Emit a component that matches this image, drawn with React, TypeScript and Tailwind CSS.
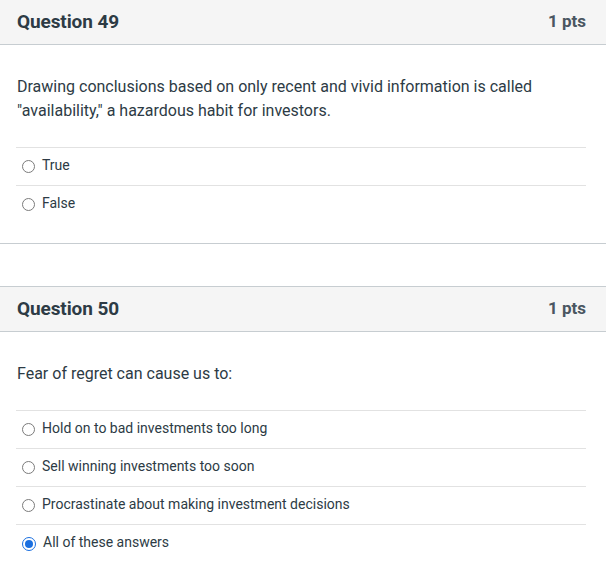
import React from 'react';

type Question = {
  title: string;
  text: React.ReactNode;
  answers: string[];
  selected?: number;
};

const questions: Question[] = [
  {
    title: 'Question 49',
    text: (
      <>
        Drawing conclusions based on only recent and vivid information is called
        <br />
        "availability," a hazardous habit for investors.
      </>
    ),
    answers: ['True', 'False'],
  },
  {
    title: 'Question 50',
    text: 'Fear of regret can cause us to:',
    answers: [
      'Hold on to bad investments too long',
      'Sell winning investments too soon',
      'Procrastinate about making investment decisions',
      'All of these answers',
    ],
    selected: 3,
  },
];

const Radio = ({ checked }: { checked: boolean }) =>
  checked ? (
    <span className="w-[14px] h-[14px] rounded-full border-[1.5px] border-[#1a6fe0] flex items-center justify-center shrink-0">
      <span className="w-[8px] h-[8px] rounded-full bg-[#1a6fe0]" />
    </span>
  ) : (
    <span className="w-[13px] h-[13px] rounded-full border border-[#7b7b7b] bg-white shrink-0" />
  );

const QuestionBlock = ({ q, first }: { q: Question; first: boolean }) => (
  <section className={`border-b border-[#c7cdd1] ${first ? '' : 'mt-[42px] border-t'}`}>
    <div className="h-[45px] bg-[#f5f5f5] border-b border-[#c7cdd1] pl-[17px] pr-[20px] flex items-center justify-between">
      <h2 className="text-[19px] font-bold text-[#2d3b45] tracking-[-0.1px]">{q.title}</h2>
      <span className="text-[17px] font-bold text-[#4a5661]">1 pts</span>
    </div>
    <div className="pl-[16px] pr-[20px] pt-[30px] pb-5">
      <p className="text-[16px] leading-6 text-[#2d3b45] pl-[1px]">{q.text}</p>
      <div className="mt-[24px]">
        {q.answers.map((a, i) => (
          <div key={a} className="h-[38px] border-t border-[#e2e2e2] flex items-center gap-[7px] pl-[6px]">
            <Radio checked={q.selected === i} />
            <span className="text-[14px] text-[#2d3b45] -translate-y-px">{a}</span>
          </div>
        ))}
      </div>
    </div>
  </section>
);

export default function App() {
  return (
    <div className="w-[606px] h-[562px] overflow-hidden bg-white font-['Roboto',sans-serif]">
      {questions.map((q, i) => (
        <QuestionBlock key={q.title} q={q} first={i === 0} />
      ))}
    </div>
  );
}
